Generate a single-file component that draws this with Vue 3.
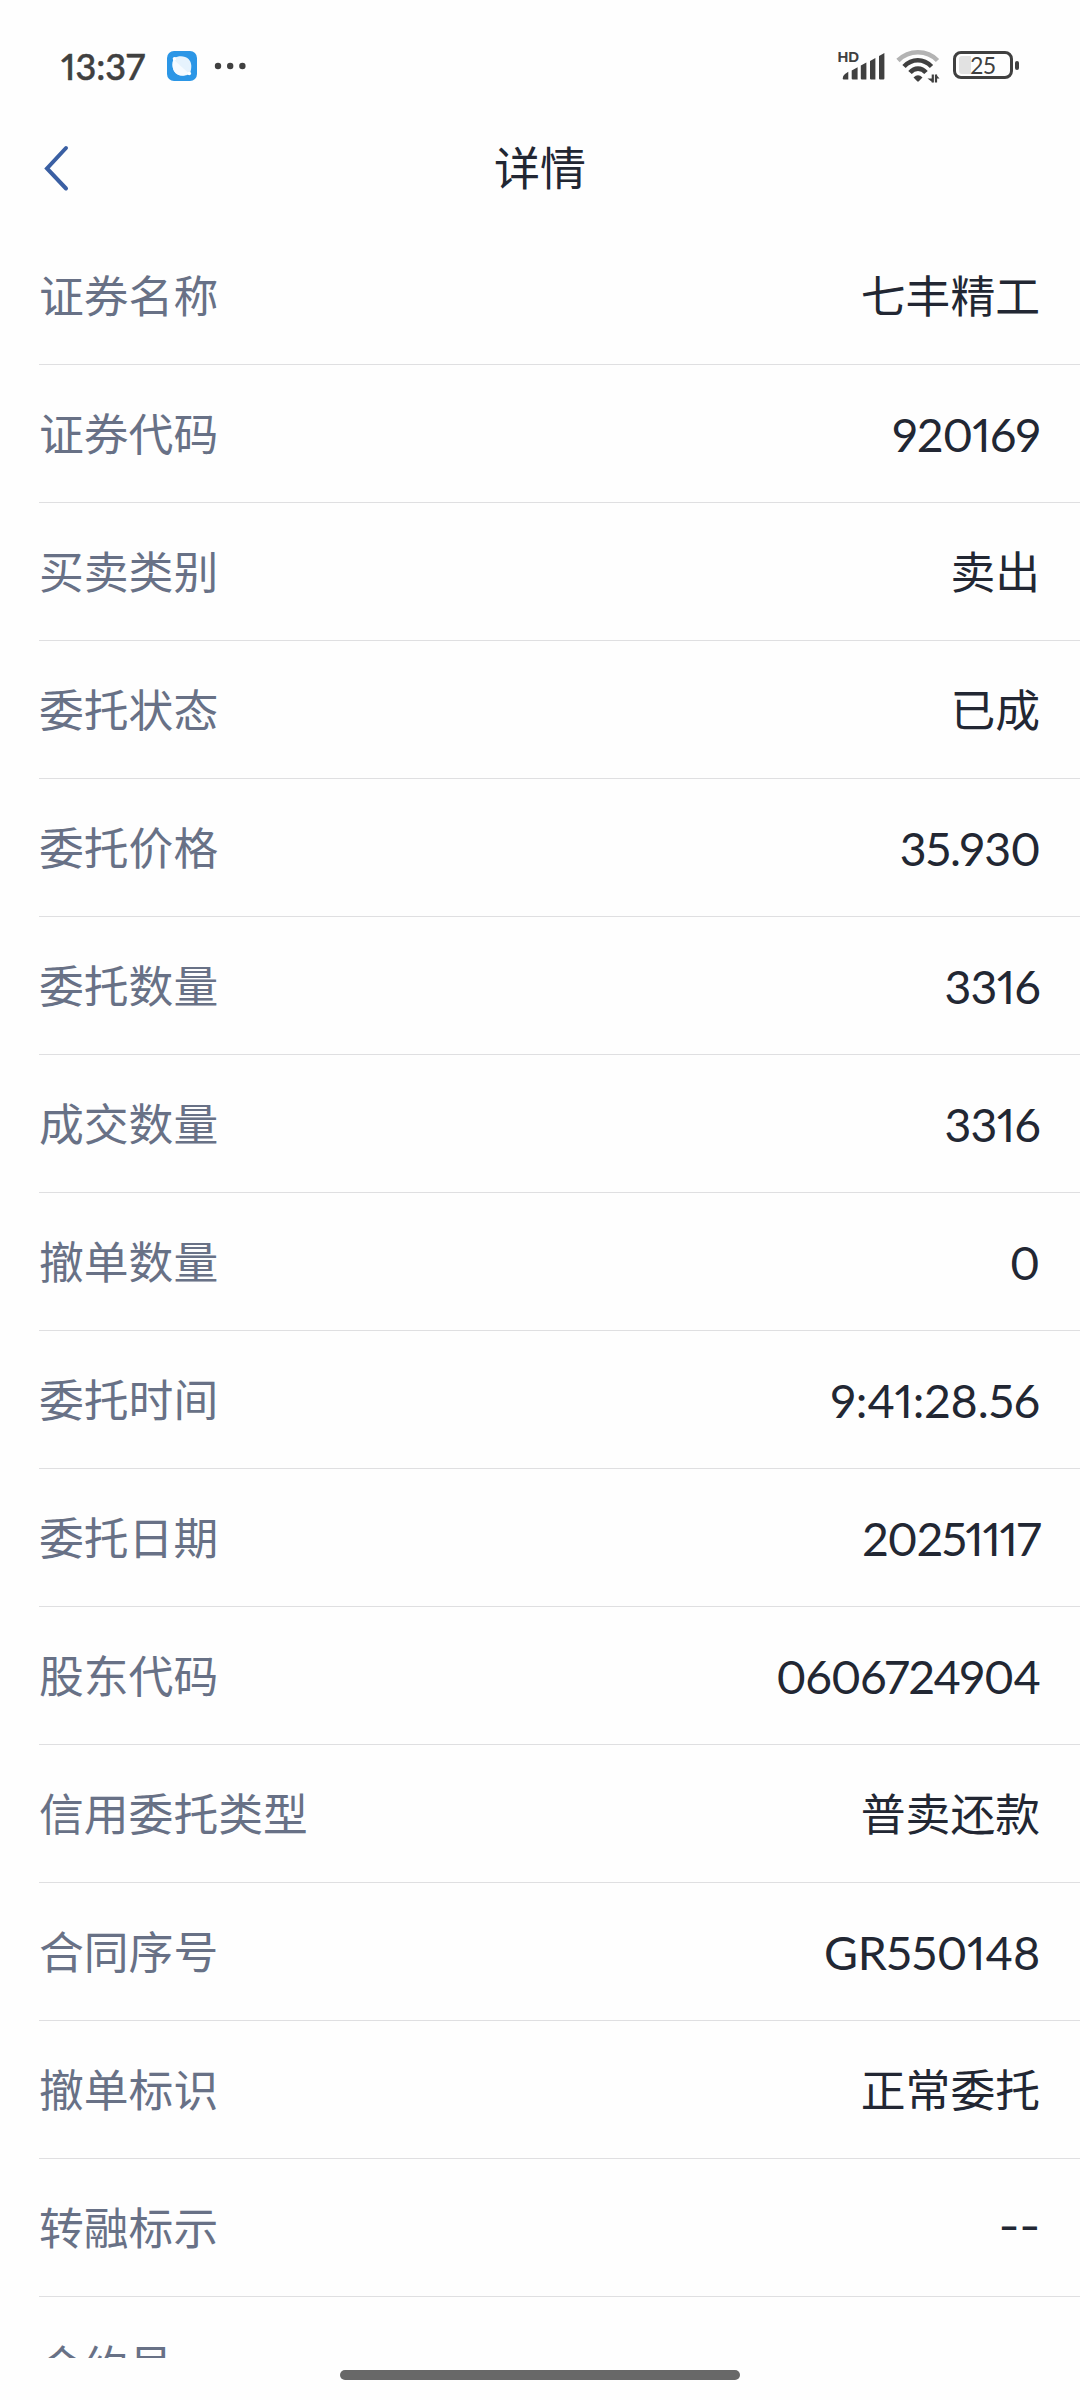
<template>
  <div class="screen">
    <header class="status-bar">
      <span class="clock">13:37</span>
      <svg class="app-badge" width="30" height="30" viewBox="0 0 30 30">
        <rect width="30" height="30" rx="7" fill="#2b96e6" />
        <path
          d="M7 7C12 4.500 18 4.800 21.500 8C25 11.500 25 17 22.800 22.800C18 25.500 12 25.200 8.500 22C5 18.500 4.800 12 7 7Z"
          fill="#e6f3fd"
        />
        <path d="M6.500 8.500L22 22.500C17 25.500 12 25.200 8.500 22C5 18.500 4.800 12 6.500 8.500Z" fill="#f6fbff" />
        <circle cx="7.500" cy="7.700" r="1.800" fill="#fff" />
        <circle cx="22.300" cy="22.500" r="1.800" fill="#fff" />
      </svg>
      <svg class="more" width="32" height="8" viewBox="0 0 32 8" fill="#404040">
        <circle cx="4" cy="4" r="3.200" />
        <circle cx="16.200" cy="4" r="3.200" />
        <circle cx="28.400" cy="4" r="3.200" />
      </svg>

      <svg class="signal" width="48" height="32" viewBox="0 0 48 32" fill="#404040">
        <text x="0.500" y="11.500" class="hd">HD</text>
        <path d="M5.700 28.500Q5.700 25.500 8 24L11.300 21.800V29.600H6.800Q5.700 29.600 5.700 28.500Z" />
        <path d="M14.700 28.500V20.500L20.600 17.300V29.600H15.800Q14.700 29.600 14.700 28.500Z" />
        <path d="M23.800 28.500V15.500L29.400 12.500V29.600H24.900Q23.800 29.600 23.800 28.500Z" />
        <path d="M33 28.500V11L38.400 8V29.600H34.100Q33 29.600 33 28.500Z" />
        <path d="M42 28.500V6L47.400 3V28.500Q47.400 29.600 46.300 29.600H43.100Q42 29.600 42 28.500Z" />
      </svg>

      <svg class="wifi" width="44" height="34" viewBox="0 0 44 34" fill="none" stroke-width="4.600">
        <path d="M2 11.500C13 0.500 31 0.500 41.500 11.500" stroke="#b3b3b3" />
        <path d="M8 17.500C16 9.200 27.500 9.200 35.500 17.500" stroke="#404040" />
        <path d="M14 23.500C18.500 18.300 25.500 18.300 30 23.500" stroke="#404040" />
        <path d="M17.500 28.500Q22 24 26.500 28.500L22.800 32.300Q22 33 21.200 32.300Z" fill="#404040" />
        <path d="M36.800 25.500V33.500M40 33.500V25.500" stroke="#404040" stroke-width="2.200" />
        <path d="M36.800 33.500L31.500 29.500H36.800ZM40 25.500L43.500 29.500H40Z" fill="#404040" />
      </svg>

      <div class="battery">
        <span class="battery-body">
          <span class="battery-level" :style="{ width: batteryLevel * 0.48 + 'px' }"></span>
          <span class="battery-text">{{ batteryLevel }}</span>
        </span>
        <span class="battery-tip"></span>
      </div>
    </header>

    <nav class="nav-bar">
      <button type="button" class="back" aria-label="返回">
        <svg width="26" height="48" viewBox="0 0 26 48">
          <path
            d="M23 4L4 24.500L23 44.500"
            fill="none"
            stroke="#3a5fa3"
            stroke-width="4"
            stroke-linecap="round"
          />
        </svg>
      </button>
      <h1>详情</h1>
    </nav>

    <main class="detail-list">
      <div v-for="row in rows" :key="row.label" class="detail-row">
        <span class="label">{{ row.label }}</span>
        <span
          class="value"
          :class="row.type"
          :style="{ letterSpacing: (row.spacing || 0) + 'px' }"
        >{{ row.value }}</span>
      </div>
    </main>

    <footer class="home-area">
      <span class="home-indicator"></span>
    </footer>
  </div>
</template>

<script setup>
const batteryLevel = 25

const rows = [
  { label: '证券名称', value: '七丰精工' },
  { label: '证券代码', value: '920169', type: 'number', spacing: -0.8 },
  { label: '买卖类别', value: '卖出' },
  { label: '委托状态', value: '已成' },
  { label: '委托价格', value: '35.930', type: 'number', spacing: -0.8 },
  { label: '委托数量', value: '3316', type: 'number', spacing: -0.7 },
  { label: '成交数量', value: '3316', type: 'number', spacing: -0.7 },
  { label: '撤单数量', value: '0', type: 'number' },
  { label: '委托时间', value: '9:41:28.56', type: 'number', spacing: -0.1 },
  { label: '委托日期', value: '20251117', type: 'number', spacing: -1.3 },
  { label: '股东代码', value: '0606724904', type: 'number', spacing: -1.1 },
  { label: '信用委托类型', value: '普卖还款' },
  { label: '合同序号', value: 'GR550148', type: 'number', spacing: -0.2 },
  { label: '撤单标识', value: '正常委托' },
  { label: '转融标示', value: '--', type: 'empty' },
  { label: '合约号', value: '' }
]
</script>

<style>
body {
  margin: 0;
  background: #fefefe;
}
</style>

<style scoped>
.screen {
  display: flex;
  flex-direction: column;
  width: 1080px;
  height: 2400px;
  overflow: hidden;
  background: #fefefe;
  color: #222733;
  font-family: Lato, "Noto Sans CJK SC", sans-serif;
  font-variant-numeric: proportional-nums;
}

.status-bar {
  display: flex;
  flex: none;
  align-items: center;
  box-sizing: border-box;
  height: 132px;
  padding: 0 61px;
  color: #404040;
}

.clock {
  width: 86px;
  font-size: 36px;
  font-weight: 500;
  line-height: 36px;
  -webkit-text-stroke: 0.500px #404040;
}

.app-badge {
  margin-left: 20px;
}

.more {
  margin-left: 17px;
}

.signal {
  margin-left: auto;
  overflow: visible;
}

.hd {
  font-family: "Liberation Sans", Arial, sans-serif;
  font-size: 15px;
  font-weight: 700;
}

.wifi {
  margin-left: 11px;
}

.battery {
  display: flex;
  align-items: center;
  margin-bottom: 2px;
  margin-left: 13px;
}

.battery-body {
  position: relative;
  display: flex;
  align-items: center;
  justify-content: center;
  box-sizing: border-box;
  width: 60px;
  height: 28px;
  border: 3px solid #404040;
  border-radius: 8px;
}

.battery-level {
  position: absolute;
  top: 2px;
  bottom: 2px;
  left: 3px;
  border-radius: 3px 0 0 3px;
  background: #e2e2e2;
}

.battery-text {
  position: relative;
  font-size: 23px;
  line-height: 22px;
}

.battery-tip {
  width: 4px;
  height: 9px;
  margin-left: 2px;
  border-radius: 2px;
  background: #404040;
}

.nav-bar {
  display: grid;
  flex: none;
  grid-template-columns: 100px 1fr 100px;
  align-items: center;
  height: 72px;
  margin-bottom: 23px;
}

.back {
  display: flex;
  margin: 0;
  padding: 0 0 0 43px;
  border: 0;
  background: none;
}

h1 {
  margin: 0;
  font-size: 46px;
  font-weight: 400;
  line-height: 72px;
  text-align: center;
}

.detail-list {
  flex: none;
  height: 2131px;
  overflow: hidden;
}

.detail-row {
  display: flex;
  align-items: center;
  justify-content: space-between;
  box-sizing: border-box;
  height: 138px;
  margin-left: 39px;
  padding-right: 40px;
  border-bottom: 1px solid #dfdfe1;
  font-size: 44.800px;
}

.label {
  padding-bottom: 5px;
  color: #687186;
}

.value {
  padding-bottom: 5px;
}

.value.number {
  padding-bottom: 0;
  font-size: 46.500px;
}

.value.empty {
  padding-bottom: 4px;
  font-family: Inter, sans-serif;
}

.home-area {
  display: flex;
  justify-content: center;
  padding-top: 12px;
}

.home-indicator {
  width: 400px;
  height: 10px;
  border-radius: 5px;
  background: #686868;
}
</style>
